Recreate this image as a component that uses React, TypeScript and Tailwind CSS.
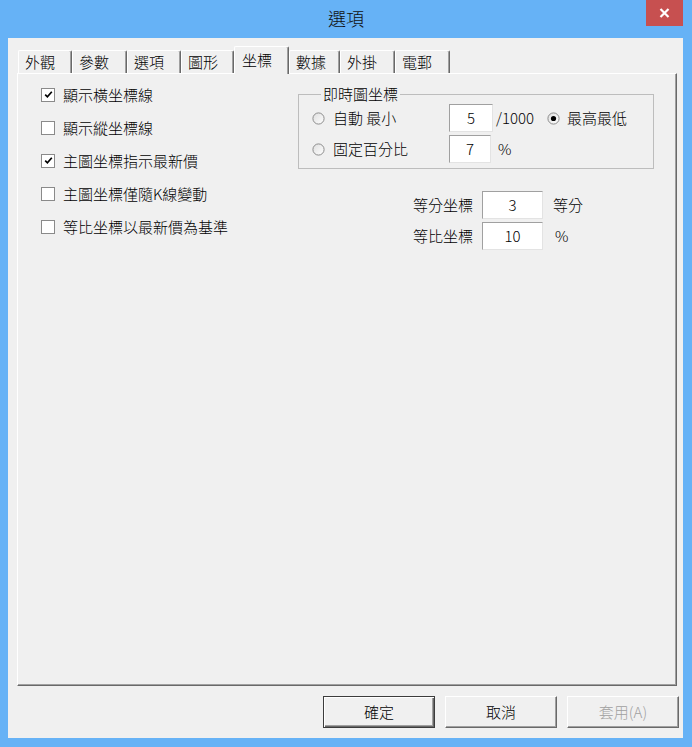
import React from "react";

const tabs: { label: string; w: string; selected?: boolean }[] = [
  { label: "外觀", w: "w-[54px]" },
  { label: "參數", w: "w-[55px]" },
  { label: "選項", w: "w-[54px]" },
  { label: "圖形", w: "w-[53px]" },
  { label: "坐標", w: "w-[55px]", selected: true },
  { label: "數據", w: "w-[51px]" },
  { label: "外掛", w: "w-[55px]" },
  { label: "電郵", w: "w-[55px]" },
];

function Checkbox({ checked }: { checked?: boolean }) {
  return (
    <span className="w-[14px] h-[14px] border border-[#8a8a8a] bg-white flex items-center justify-center shrink-0">
      {checked && (
        <svg width="9" height="9" viewBox="0 0 9 9">
          <path d="M1.2 4.6 L3.4 6.8 L7.8 1.8" fill="none" stroke="#000" strokeWidth="1.7" />
        </svg>
      )}
    </span>
  );
}

function Radio({ checked }: { checked?: boolean }) {
  return (
    <svg width="13" height="13" viewBox="0 0 13 13" className="shrink-0">
      <defs>
        <linearGradient id="rg" x1="0" y1="0" x2="1" y2="1">
          <stop offset="0" stopColor="#dedede" />
          <stop offset="1" stopColor="#ffffff" />
        </linearGradient>
      </defs>
      <circle cx="6.5" cy="6.5" r="5.6" fill="url(#rg)" stroke="#8c8c8c" strokeWidth="1" />
      {checked && <circle cx="6.5" cy="6.5" r="2.6" fill="#000" />}
    </svg>
  );
}

function Field({ value, w }: { value: string; w: string }) {
  return (
    <div
      className={`${w} h-[28px] bg-white border border-t-[#a0a0a0] border-l-[#a0a0a0] border-r-[#e3e3e3] border-b-[#e3e3e3] flex items-center justify-center shrink-0`}
    >
      {value}
    </div>
  );
}

const checks: { label: string; checked?: boolean }[] = [
  { label: "顯示橫坐標線", checked: true },
  { label: "顯示縱坐標線" },
  { label: "主圖坐標指示最新價", checked: true },
  { label: "主圖坐標僅隨K線變動" },
  { label: "等比坐標以最新價為基準" },
];

export default function App() {
  return (
    <div className="w-[692px] h-[747px] bg-[#66b2f6] flex flex-col font-['Noto_Sans_CJK_TC','Microsoft_JhengHei',sans-serif] font-light text-[15px] leading-[20px] text-black">
      {/* Title bar */}
      <div className="h-[38px] grid grid-cols-[1fr_auto_1fr] shrink-0">
        <div />
        <div className="pt-[6px] text-[18px] leading-[24px] text-[#111]">選項</div>
        <div className="justify-self-end mr-[9px] w-[37px] h-[26px] bg-[#c75050] flex items-center justify-center">
          <svg width="11" height="10" viewBox="0 0 11 10">
            <path d="M1.5 1 L9.5 9 M9.5 1 L1.5 9" stroke="#fff" strokeWidth="2.2" />
          </svg>
        </div>
      </div>

      {/* Client area */}
      <div className="ml-[8px] mr-[9px] h-[700px] bg-[#f0f0f0] flex flex-col pl-[9px] pr-[4px] pt-[8px] pb-[10px]">
        {/* Tab strip */}
        <div className="h-[27px] flex items-end ml-[1px] shrink-0">
          {tabs.map((t) =>
            t.selected ? (
              <div
                key={t.label}
                className={`${t.w} h-[28px] -mb-[1px] relative z-10 bg-[#f0f0f0] border-t border-l border-r border-t-white border-l-white border-r-[#696969] shadow-[inset_-1px_0_0_#a0a0a0] rounded-t-[2px] pl-[7px] pt-[3px]`}
              >
                {t.label}
              </div>
            ) : (
              <div
                key={t.label}
                className={`${t.w} h-[23px] bg-[#f0f0f0] border-t border-l border-r border-t-white border-l-white border-r-[#696969] shadow-[inset_-1px_0_0_#a0a0a0] rounded-t-[2px] pl-[6px] pt-[1px]`}
              >
                {t.label}
              </div>
            )
          )}
        </div>

        {/* Tab panel */}
        <div className="mr-[2px] flex-1 border border-t-white border-l-white border-r-[#696969] border-b-[#696969] shadow-[inset_-1px_-1px_0_#a0a0a0] flex">
          {/* Left column */}
          <div className="w-[280px] pl-[23px] pt-[4px] flex flex-col shrink-0">
            {checks.map((c) => (
              <div key={c.label} className="h-[33px] flex items-center gap-[8px]">
                <Checkbox checked={c.checked} />
                <span>{c.label}</span>
              </div>
            ))}
          </div>

          {/* Right column */}
          <div className="flex flex-col pt-[10px]">
            <fieldset className="w-[356px] border border-[#bdbdbd] pl-[13px] pb-[5px] m-0">
              <legend className="ml-[9px] px-[2px] leading-[20px]">即時圖坐標</legend>
              <div className="flex flex-col gap-[3px]">
                <div className="h-[28px] flex items-center">
                  <div className="w-[137px] flex items-center gap-[8px]">
                    <Radio />
                    <span>自動 最小</span>
                  </div>
                  <Field value="5" w="w-[44px]" />
                  <span className="ml-[3px] w-[51px]">/1000</span>
                  <div className="flex items-center gap-[7px]">
                    <Radio checked />
                    <span>最高最低</span>
                  </div>
                </div>
                <div className="h-[28px] flex items-center">
                  <div className="w-[137px] flex items-center gap-[8px]">
                    <Radio />
                    <span>固定百分比</span>
                  </div>
                  <Field value="7" w="w-[42px]" />
                  <span className="ml-[7px]">%</span>
                </div>
              </div>
            </fieldset>

            <div className="mt-[22px] pl-[115px] flex flex-col gap-[3px]">
              <div className="h-[28px] flex items-center">
                <span className="w-[60px] text-right">等分坐標</span>
                <div className="ml-[9px]">
                  <Field value="3" w="w-[61px]" />
                </div>
                <span className="ml-[10px]">等分</span>
              </div>
              <div className="h-[28px] flex items-center">
                <span className="w-[60px] text-right">等比坐標</span>
                <div className="ml-[9px]">
                  <Field value="10" w="w-[61px]" />
                </div>
                <span className="ml-[12px]">%</span>
              </div>
            </div>
          </div>
        </div>

        {/* Buttons */}
        <div className="mt-[10px] flex justify-end gap-[10px] shrink-0">
          <button className="w-[112px] h-[32px] bg-[#f0f0f0] border border-[#3c3c3c] shadow-[inset_1px_1px_0_#ffffff,inset_-1px_-1px_0_#696969,inset_-2px_-2px_0_#a0a0a0] flex items-center justify-center">
            確定
          </button>
          <button className="w-[112px] h-[32px] bg-[#f0f0f0] border border-t-white border-l-white border-r-[#696969] border-b-[#696969] shadow-[inset_-1px_-1px_0_#a0a0a0] flex items-center justify-center">
            取消
          </button>
          <button className="w-[112px] h-[32px] bg-[#f0f0f0] border border-t-white border-l-white border-r-[#696969] border-b-[#696969] shadow-[inset_-1px_-1px_0_#a0a0a0] flex items-center justify-center text-[#a0a0a0]">
            套用(A)
          </button>
        </div>
      </div>
    </div>
  );
}
